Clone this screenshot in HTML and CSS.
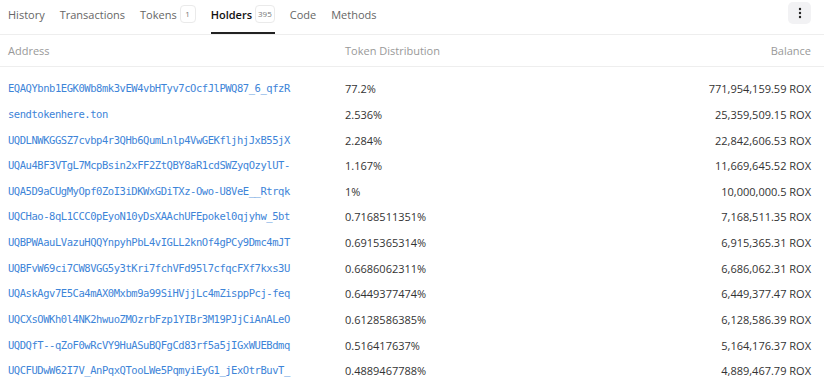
FILE: index.html
```html
<!DOCTYPE html>
<html lang="en">
<head>
    <meta charset="UTF-8">
    <title>Holders</title>
    <link rel="stylesheet" href="styles.css">
</head>
<body>
    <div class="tabs">
        <div class="tab">History</div>
        <div class="tab">Transactions</div>
        <div class="tab">Tokens <span class="badge">1</span></div>
        <div class="tab active">Holders <span class="badge">395</span></div>
        <div class="tab">Code</div>
        <div class="tab">Methods</div>
        <button class="more-btn">
            <svg width="4" height="12" viewBox="0 0 4 12"><circle cx="2" cy="2" r="1.2" fill="#222"/><circle cx="2" cy="6" r="1.2" fill="#222"/><circle cx="2" cy="10" r="1.2" fill="#222"/></svg>
        </button>
    </div>

    <div class="holders">
        <div class="row head">
            <div>Address</div>
            <div>Token Distribution</div>
            <div class="right">Balance</div>
        </div>
        <div class="rows">
            <div class="row"><a class="addr">EQAQYbnb1EGK0Wb8mk3vEW4vbHTyv7cOcfJlPWQ87_6_qfzR</a><div>77.2%</div><div class="right">771,954,159.59 ROX</div></div>
            <div class="row"><a class="addr">sendtokenhere.ton</a><div>2.536%</div><div class="right">25,359,509.15 ROX</div></div>
            <div class="row"><a class="addr">UQDLNWKGGSZ7cvbp4r3QHb6QumLnlp4VwGEKfljhjJxB55jX</a><div>2.284%</div><div class="right">22,842,606.53 ROX</div></div>
            <div class="row"><a class="addr">UQAu4BF3VTgL7McpBsin2xFF2ZtQBY8aR1cdSWZyqOzylUT-</a><div>1.167%</div><div class="right">11,669,645.52 ROX</div></div>
            <div class="row"><a class="addr">UQA5D9aCUgMyOpf0ZoI3iDKWxGDiTXz-Owo-U8VeE__Rtrqk</a><div>1%</div><div class="right">10,000,000.5 ROX</div></div>
            <div class="row"><a class="addr">UQCHao-8qL1CCC0pEyoN10yDsXAAchUFEpokel0qjyhw_5bt</a><div>0.7168511351%</div><div class="right">7,168,511.35 ROX</div></div>
            <div class="row"><a class="addr">UQBPWAauLVazuHQQYnpyhPbL4vIGLL2knOf4gPCy9Dmc4mJT</a><div>0.6915365314%</div><div class="right">6,915,365.31 ROX</div></div>
            <div class="row"><a class="addr">UQBFvW69ci7CW8VGG5y3tKri7fchVFd95l7cfqcFXf7kxs3U</a><div>0.6686062311%</div><div class="right">6,686,062.31 ROX</div></div>
            <div class="row"><a class="addr">UQAskAgv7E5Ca4mAX0Mxbm9a99SiHVjjLc4mZisppPcj-feq</a><div>0.6449377474%</div><div class="right">6,449,377.47 ROX</div></div>
            <div class="row"><a class="addr">UQCXsOWKh0l4NK2hwuoZMOzrbFzp1YIBr3M19PJjCiAnALeO</a><div>0.6128586385%</div><div class="right">6,128,586.39 ROX</div></div>
            <div class="row"><a class="addr">UQDQfT--qZoF0wRcVY9HuASuBQFgCd83rf5a5jIGxWUEBdmq</a><div>0.516417637%</div><div class="right">5,164,176.37 ROX</div></div>
            <div class="row"><a class="addr">UQCFUDwW62I7V_AnPqxQTooLWe5PqmyiEyG1_jExOtrBuvT_</a><div>0.4889467788%</div><div class="right">4,889,467.79 ROX</div></div>
        </div>
    </div>
</body>
</html>
```

FILE: styles.css
```css
* { margin: 0; padding: 0; box-sizing: border-box; }
body {
    font-family: 'Open Sans', sans-serif;
    font-size: 11px;
    color: #333;
    background: white;
    overflow: hidden;
}
.tabs {
    display: flex;
    align-items: stretch;
    gap: 15px;
    height: 35px;
    padding: 0 13px 0 8px;
    border-bottom: 1px solid #eeeeee;
}
.tab {
    display: flex;
    align-items: center;
    gap: 3px;
    height: 34px;
    padding-bottom: 4px;
    font-size: 11px;
    color: #666;
    border-bottom: 2px solid transparent;
}
.tab.active {
    color: #111;
    font-weight: 600;
    border-bottom-color: #222;
}
.badge {
    font-size: 8px;
    font-weight: 400;
    color: #777;
    border: 1px solid #eaeaea;
    border-radius: 4px;
    padding: 1px 2px;
    min-width: 16px;
    text-align: center;
    line-height: 14px;
}
.more-btn {
    margin-left: auto;
    margin-top: 2px;
    width: 23px;
    height: 22px;
    border: none;
    border-radius: 5px;
    background: #f2f2f4;
    display: flex;
    align-items: center;
    justify-content: center;
}
.row {
    display: grid;
    grid-template-columns: 337px 1fr 200px;
    align-items: center;
    height: 25.64px;
    padding: 0 13px 0 8px;
}
.row.head {
    height: 32px;
    color: #999;
    border-bottom: 1px solid #eeeeee;
}
.rows { padding-top: 9px; }
.right { text-align: right; }
.addr {
    font-family: 'DejaVu Sans Mono', monospace;
    font-size: 10.5px;
    line-height: 15px;
    letter-spacing: -0.45px;
    color: #3d84d8;
    white-space: nowrap;
    overflow: hidden;
}
```
